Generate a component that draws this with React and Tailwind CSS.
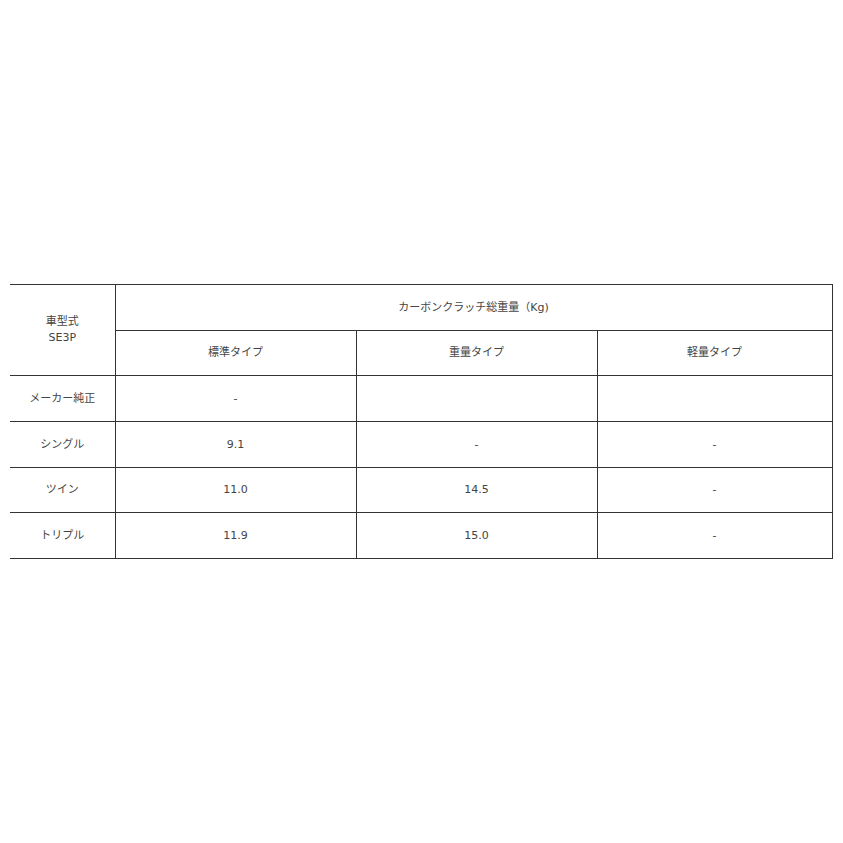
export default function App() {
  const cell = "border border-[#333] text-center align-middle p-0";
  const rows = [
    ["メーカー純正", "-", "", "", "h-[46px]"],
    ["シングル", "9.1", "-", "-", "h-[46px]"],
    ["ツイン", "11.0", "14.5", "-", "h-[45px]"],
    ["トリプル", "11.9", "15.0", "-", "h-[46px]"],
  ];
  return (
    <div className="w-[843px] h-[843px] bg-white pt-[284px] pl-[10px]" style={{ fontFamily: '"DejaVu Sans", "Noto Sans CJK JP", sans-serif' }}>
      <table className="border-collapse text-[11px] leading-[16px] text-[#444] table-fixed w-[822px]">
        <colgroup>
          <col className="w-[105px]" />
          <col className="w-[241px]" />
          <col className="w-[241px]" />
          <col className="w-[235px]" />
        </colgroup>
        <tbody>
          <tr className="h-[46px]">
            <td rowSpan={2} className={cell + " border-l-0"}>
              <div>車型式</div>
              <div>SE3P</div>
            </td>
            <td colSpan={3} className={cell}>カーボンクラッチ総重量（Kg)</td>
          </tr>
          <tr className="h-[45px]">
            <td className={cell}>標準タイプ</td>
            <td className={cell}>重量タイプ</td>
            <td className={cell}>軽量タイプ</td>
          </tr>
          {rows.map((r, i) => (
            <tr key={i} className={r[4]}>
              <td className={cell + " border-l-0"}>{r[0]}</td>
              <td className={cell}>{r[1]}</td>
              <td className={cell}>{r[2]}</td>
              <td className={cell}>{r[3]}</td>
            </tr>
          ))}
        </tbody>
      </table>
    </div>
  );
}
